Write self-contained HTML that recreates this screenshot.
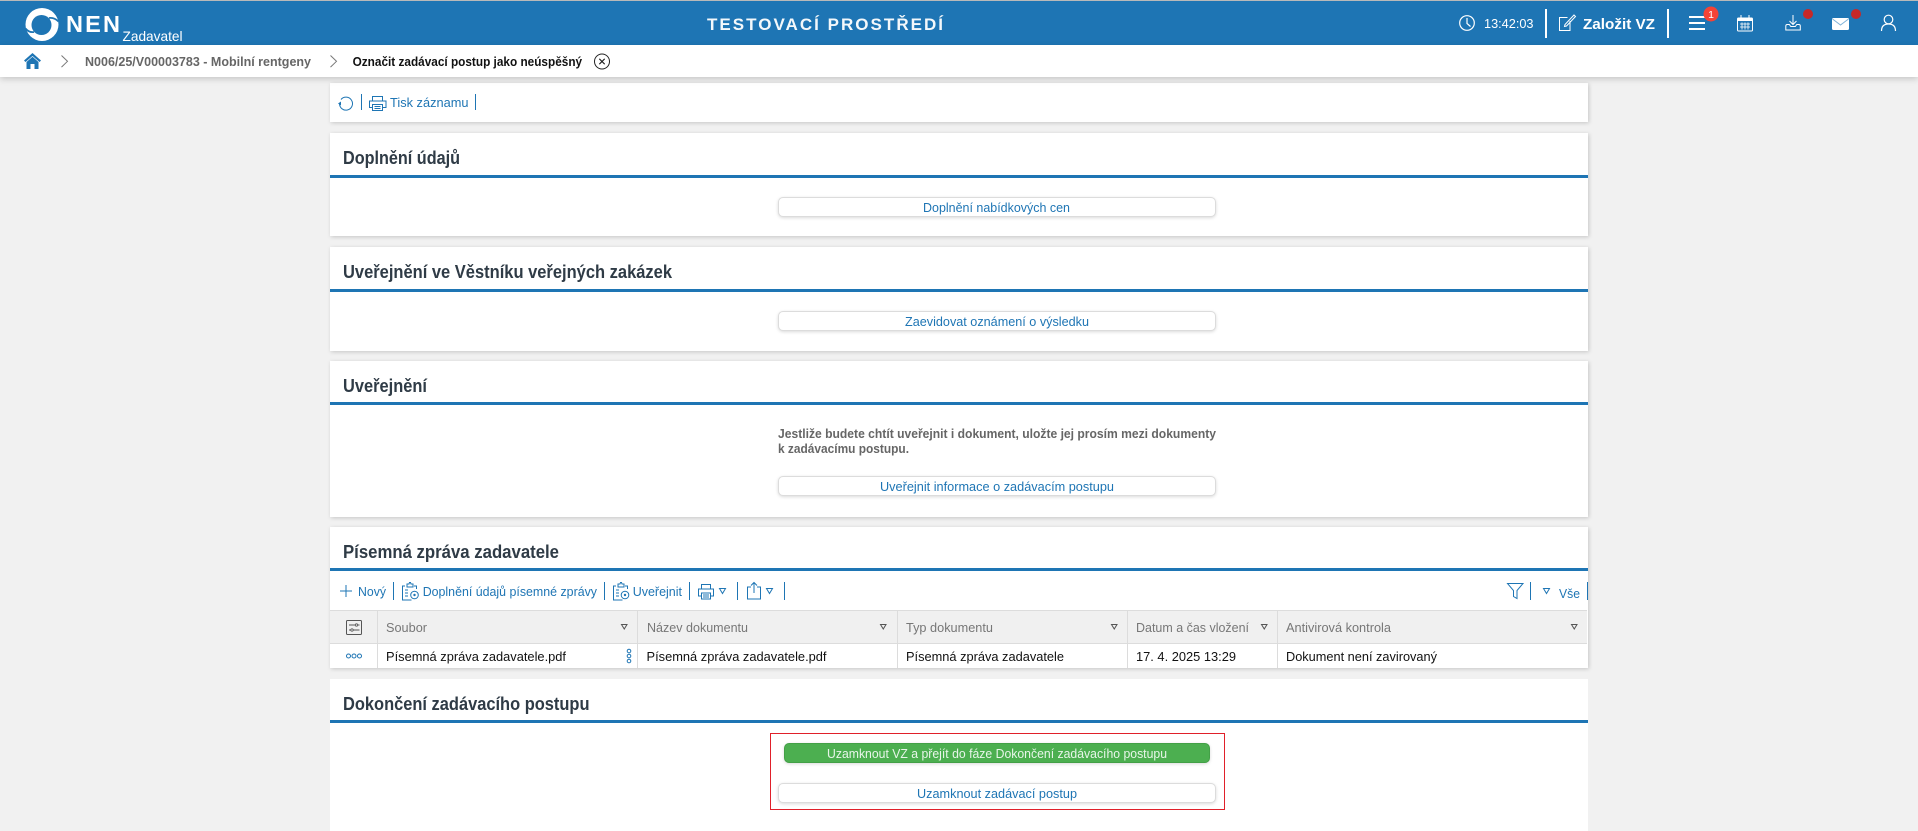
<!DOCTYPE html>
<html lang="cs"><head><meta charset="utf-8"><title>NEN Zadavatel</title>
<style>
html,body{margin:0;padding:0;width:1918px;height:831px;overflow:hidden;background:#f1f1f1;font-family:"Liberation Sans",sans-serif}
body{position:relative}
.a{position:absolute}
.hdr{left:0;top:0;width:1918px;height:45px;background:#1e75b4;border-top:1px solid #b9b9b9;box-sizing:border-box}
.bc{left:0;top:45px;width:1918px;height:32px;background:#fff;box-shadow:0 2px 6px rgba(0,0,0,.18)}
.p{left:330px;width:1258px;background:#fff;box-shadow:1px 1px 4px rgba(0,0,0,.18)}
.ln{left:330px;width:1258px;height:3px;background:#1e75b4}
.btn{left:778px;width:438px;height:20px;box-sizing:border-box;background:#fff;border:1px solid #dcdcdc;border-radius:5px;box-shadow:0 1px 3px rgba(0,0,0,.15)}
svg{position:absolute;left:0;top:0}
text{font-family:"Liberation Sans",sans-serif}
.t{font-size:18px;font-weight:700;fill:#2f3b46}
.l{font-size:13px;fill:#1e75b4}
.d{font-size:13px;fill:#111}
.h{font-size:13px;fill:#777}
.w{fill:none;stroke:#fff;stroke-width:1.3}
.e{fill:none;stroke:#fff;stroke-width:1}
.g{fill:none;stroke:#1e75b4;stroke-width:1}
</style></head><body>
<div class="a hdr"></div>
<div class="a p" style="top:83px;height:39px"></div>
<div class="a p" style="top:133px;height:103px"></div><div class="a ln" style="top:175px"></div>
<div class="a p" style="top:247px;height:104px"></div><div class="a ln" style="top:289px"></div>
<div class="a p" style="top:361px;height:156px"></div><div class="a ln" style="top:402px"></div>
<div class="a p" style="top:527px;height:141px"></div><div class="a ln" style="top:568px"></div>
<div class="a p" style="top:679px;height:152px;box-shadow:none"></div><div class="a ln" style="top:720px"></div>
<div class="a bc"></div>
<div class="a" style="left:330px;top:610px;width:1257px;height:34px;background:#f0f0f0;border-top:1px solid #dcdcdc;border-bottom:1px solid #dcdcdc;box-sizing:border-box"></div>
<div class="a" style="left:377px;top:610px;width:1px;height:58px;background:#dcdcdc"></div>
<div class="a" style="left:637px;top:610px;width:1px;height:58px;background:#dcdcdc"></div>
<div class="a" style="left:897px;top:610px;width:1px;height:58px;background:#dcdcdc"></div>
<div class="a" style="left:1127px;top:610px;width:1px;height:58px;background:#dcdcdc"></div>
<div class="a" style="left:1277px;top:610px;width:1px;height:58px;background:#dcdcdc"></div>
<div class="a btn" style="top:197px"></div>
<div class="a btn" style="top:311px"></div>
<div class="a btn" style="top:476px"></div>
<div class="a" style="left:770px;top:733px;width:455px;height:77px;box-sizing:border-box;border:1px solid #e0202a"></div>
<div class="a" style="left:784px;top:743px;width:426px;height:20px;background:#4caf50;border:1px solid #43a047;box-sizing:border-box;border-radius:5px;box-shadow:0 1px 3px rgba(0,0,0,.15)"></div>
<div class="a btn" style="top:783px"></div>

<svg width="1918" height="831" viewBox="0 0 1918 831">
<!-- logo -->
<circle cx="42" cy="24.500" r="16.500" fill="#fff"/>
<circle cx="41.500" cy="25" r="10" fill="#1e75b4"/>
<path d="M49 18C52 17.500 55.500 18.500 58.500 21.500" fill="none" stroke="#1e75b4" stroke-width="1.800"/>
<path d="M34 32C31 32.500 28 31.500 25.500 28.500" fill="none" stroke="#1e75b4" stroke-width="1.800"/>
<text x="66" y="32" font-size="23.500" font-weight="700" fill="#fff" textLength="54" lengthAdjust="spacing">NEN</text>
<text x="122.500" y="41" font-size="14" fill="#fff" textLength="60" lengthAdjust="spacingAndGlyphs">Zadavatel</text>
<text x="707" y="30" font-size="17" font-weight="700" fill="#fff" fill-opacity=".95" textLength="236" lengthAdjust="spacing">TESTOVACÍ PROSTŘEDÍ</text>
<!-- header right -->
<circle cx="1467" cy="23" r="7.300" class="e" style="stroke-width:1.200"/><path d="M1467 18v5.500l3.500 3" class="e" style="stroke-width:1.200"/>
<text x="1484" y="28" font-size="13" fill="#fff" textLength="49.500" lengthAdjust="spacingAndGlyphs">13:42:03</text>
<rect x="1545" y="9" width="2" height="29" fill="#fff"/>
<path d="M1570 21v9.500h-10.500v-13h8" class="e"/><path d="M1565 24.500l-.5 2 2-.5 9-9.500-1.500-1.500z" class="e"/>
<text x="1583" y="29" font-size="15" font-weight="700" fill="#fff" textLength="72" lengthAdjust="spacingAndGlyphs">Založit VZ</text>
<rect x="1667" y="9" width="2" height="29" fill="#fff"/>
<rect x="1689" y="16" width="16" height="2" fill="#fff"/><rect x="1689" y="22" width="16" height="2" fill="#fff"/><rect x="1689" y="28" width="16" height="2" fill="#fff"/>
<circle cx="1711" cy="14" r="7.500" fill="#f44336"/><text x="1711" y="18" font-size="10.500" fill="#fff" text-anchor="middle">1</text>
<rect x="1737.500" y="18" width="15" height="13" rx="1" class="e"/><path d="M1737.500 18h15v3h-15z" fill="#fff"/><path d="M1741 15v4M1749 15v4" class="e"/><path d="M1740 24h10M1740 27h10M1742 22.500v7M1745 22.500v7M1748 22.500v7" stroke="#fff" stroke-width=".8" fill="none"/>
<path d="M1793 15v9M1789.500 21l3.500 3.500 3.500-3.500" class="e"/><path d="M1785.800 26c0 0 0-1.500 1.500-1.500h2l1.500 2h4.500l1.500-2h2c1.500 0 1.500 1.500 1.500 1.500v4h-14.500z" class="e"/>
<circle cx="1808" cy="14" r="5" fill="#c62828"/>
<rect x="1832" y="18" width="17" height="12" rx="1.500" fill="#fff"/><path d="M1832.500 19l8 6 8-6" stroke="#7fb2d8" stroke-width="1" fill="none"/>
<circle cx="1856" cy="14" r="5" fill="#c62828"/>
<circle cx="1888.500" cy="19.500" r="4.300" class="e" style="stroke-width:1.200"/><path d="M1881.500 31c0-5 3-7 7-7s7 2 7 7" class="e" style="stroke-width:1.200"/>
<!-- breadcrumb -->
<path d="M32.500 53L24 60.500l1.500 1.500 7-6 7 6 1.500-1.500z" fill="#1e75b4"/><path d="M26.500 62l6-5.200 6 5.200v7h-4v-5h-4v5h-4z" fill="#1e75b4"/>
<path d="M61.500 55.500l6 5.800-6 5.800M330.500 55.500l6 5.800-6 5.800" fill="none" stroke="#777" stroke-width="1"/>
<text x="85" y="66" font-size="12.500" font-weight="700" fill="#666" textLength="226" lengthAdjust="spacingAndGlyphs">N006/25/V00003783 - Mobilní rentgeny</text>
<text x="352.600" y="66" font-size="12.500" font-weight="700" fill="#111" textLength="229.500" lengthAdjust="spacingAndGlyphs">Označit zadávací postup jako neúspěšný</text>
<circle cx="602" cy="61.500" r="7.500" fill="none" stroke="#222" stroke-width="1"/><path d="M599.300 58.800l5.400 5.400M604.700 58.800l-5.400 5.400" stroke="#222" stroke-width="1.100"/>
<!-- toolbar -->
<path d="M341 99.500a6.500 6.500 0 1 1-1.500 4" class="g"/><path d="M338 103.500l3-2v4z" fill="#1e75b4"/>
<rect x="361" y="94" width="1" height="16" fill="#1e75b4"/>
<path d="M372.500 101v-4.500h10v4.500M372.500 107.500h-3v-6.500h16.500v6.500h-3" class="g"/><rect x="372.500" y="104.500" width="10" height="6" class="g"/><path d="M374.500 106.500h6M374.500 108.500h6" class="g"/>
<text x="390" y="107" class="l" textLength="78.500" lengthAdjust="spacingAndGlyphs">Tisk záznamu</text>
<rect x="475" y="94" width="1" height="16" fill="#1e75b4"/>
<!-- titles -->
<text x="343" y="164" class="t" textLength="117" lengthAdjust="spacingAndGlyphs">Doplnění údajů</text>
<text x="343" y="278" class="t" textLength="329" lengthAdjust="spacingAndGlyphs">Uveřejnění ve Věstníku veřejných zakázek</text>
<text x="343" y="392" class="t" textLength="84" lengthAdjust="spacingAndGlyphs">Uveřejnění</text>
<text x="343" y="558" class="t" textLength="216" lengthAdjust="spacingAndGlyphs">Písemná zpráva zadavatele</text>
<text x="343" y="710" class="t" textLength="246.500" lengthAdjust="spacingAndGlyphs">Dokončení zadávacího postupu</text>
<!-- buttons -->
<text x="923" y="212" class="l" textLength="147" lengthAdjust="spacingAndGlyphs">Doplnění nabídkových cen</text>
<text x="905" y="326" class="l" textLength="184" lengthAdjust="spacingAndGlyphs">Zaevidovat oznámení o výsledku</text>
<text x="778" y="438" font-size="12.500" font-weight="700" fill="#666" textLength="438" lengthAdjust="spacingAndGlyphs">Jestliže budete chtít uveřejnit i dokument, uložte jej prosím mezi dokumenty</text>
<text x="778" y="453" font-size="12.500" font-weight="700" fill="#666" textLength="131" lengthAdjust="spacingAndGlyphs">k zadávacímu postupu.</text>
<text x="880" y="491" class="l" textLength="234" lengthAdjust="spacingAndGlyphs">Uveřejnit informace o zadávacím postupu</text>
<text x="827" y="758" font-size="13" fill="#e8f5e9" textLength="340" lengthAdjust="spacingAndGlyphs">Uzamknout VZ a přejít do fáze Dokončení zadávacího postupu</text>
<text x="917" y="798" class="l" textLength="160" lengthAdjust="spacingAndGlyphs">Uzamknout zadávací postup</text>
<!-- table toolbar -->
<path d="M340 591h12M346 585v12" class="g"/>
<text x="358" y="596" class="l" textLength="28" lengthAdjust="spacingAndGlyphs">Nový</text>
<rect x="393" y="582" width="1" height="18" fill="#1e75b4"/>
<path d="M405 586h-2.500v14h9M414 586h2.500v3M407 586v-2h2l.5-1.500h1l.5 1.500h2v3h-6z" class="g"/><path d="M405 590h3M405 593h3M405 596h3" class="g"/><circle cx="414.500" cy="595" r="3.800" class="g"/><circle cx="414.500" cy="595" r="1.200" fill="#1e75b4"/>
<text x="422.700" y="596" class="l" textLength="174.300" lengthAdjust="spacingAndGlyphs">Doplnění údajů písemné zprávy</text>
<rect x="604" y="582" width="1" height="18" fill="#1e75b4"/>
<path d="M616 586h-2.500v14h9M625 586h2.500v3M618 586v-2h2l.5-1.500h1l.5 1.500h2v3h-6z" class="g"/><path d="M616 590h3M616 593h3M616 596h3" class="g"/><circle cx="625" cy="595" r="3.800" class="g"/><circle cx="625" cy="595" r="1.200" fill="#1e75b4"/>
<text x="632.700" y="596" class="l" textLength="49.300" lengthAdjust="spacingAndGlyphs">Uveřejnit</text>
<rect x="689" y="582" width="1" height="18" fill="#1e75b4"/>
<path d="M701.500 589v-4.500h9v4.500M701.500 596h-3v-7h15v7h-3" class="g"/><rect x="701.500" y="593" width="9" height="6" class="g"/><path d="M703 595h6M703 597h6" class="g"/>
<path d="M719.500 588.500h6l-3 5z" class="g"/>
<rect x="737" y="582" width="1" height="18" fill="#1e75b4"/>
<path d="M751 587h-3.500v12h13v-12h-3.500M754 593v-10M751 585.500l3-3 3 3" class="g"/>
<path d="M766.500 588.500h6l-3 5z" class="g"/>
<rect x="784" y="582" width="1" height="18" fill="#1e75b4"/>
<path d="M1507.500 583.500h15.500l-6 7v8l-3.500-2v-6z" class="g"/>
<rect x="1530" y="582" width="1" height="18" fill="#1e75b4"/>
<path d="M1543.500 588.500h6l-3 5z" class="g"/>
<text x="1559" y="598" class="l" textLength="21" lengthAdjust="spacingAndGlyphs">Vše</text>
<rect x="1587" y="582" width="1" height="18" fill="#1e75b4"/>
<!-- table header -->
<rect x="346.500" y="620.500" width="15" height="14" rx="1" fill="none" stroke="#555"/><path d="M349 625h6M358 625h1.500M349 630h1.500M353.500 630h6" stroke="#555"/><circle cx="356.500" cy="625" r="1.200" fill="none" stroke="#555" stroke-width=".8"/><circle cx="352" cy="630" r="1.200" fill="none" stroke="#555" stroke-width=".8"/>
<text x="386" y="632" class="h" textLength="41" lengthAdjust="spacingAndGlyphs">Soubor</text>
<text x="647" y="632" class="h" textLength="101" lengthAdjust="spacingAndGlyphs">Název dokumentu</text>
<text x="906" y="632" class="h" textLength="87" lengthAdjust="spacingAndGlyphs">Typ dokumentu</text>
<text x="1136" y="632" class="h" textLength="113" lengthAdjust="spacingAndGlyphs">Datum a čas vložení</text>
<text x="1286" y="632" class="h" textLength="105" lengthAdjust="spacingAndGlyphs">Antivirová kontrola</text>
<g fill="none" stroke="#555" stroke-width="1">
<path d="M621.500 624.500h5.500l-2.750 4.500z"/><path d="M880.500 624.500h5.500l-2.750 4.500z"/><path d="M1111.500 624.500h5.500l-2.750 4.500z"/><path d="M1261.500 624.500h5.500l-2.750 4.500z"/><path d="M1571.500 624.500h5.500l-2.750 4.500z"/>
</g>
<!-- row -->
<circle cx="348.500" cy="656" r="2" class="g"/><circle cx="354" cy="656" r="2" class="g"/><circle cx="359.500" cy="656" r="2" class="g"/>
<circle cx="629" cy="651" r="1.800" class="g"/><circle cx="629" cy="656" r="1.800" class="g"/><circle cx="629" cy="661" r="1.800" class="g"/>
<text x="386" y="661" class="d" textLength="180" lengthAdjust="spacingAndGlyphs">Písemná zpráva zadavatele.pdf</text>
<text x="646.500" y="661" class="d" textLength="180" lengthAdjust="spacingAndGlyphs">Písemná zpráva zadavatele.pdf</text>
<text x="906" y="661" class="d" textLength="158" lengthAdjust="spacingAndGlyphs">Písemná zpráva zadavatele</text>
<text x="1136" y="661" class="d" textLength="100" lengthAdjust="spacingAndGlyphs">17. 4. 2025 13:29</text>
<text x="1286" y="661" class="d" textLength="151" lengthAdjust="spacingAndGlyphs">Dokument není zavirovaný</text>
</svg>
</body></html>
